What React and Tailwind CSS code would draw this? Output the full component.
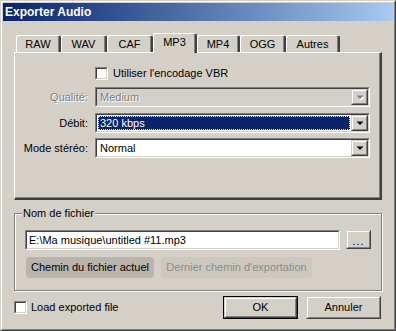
import React from 'react'

const font = { fontFamily: '"Liberation Sans", Arial, sans-serif' }

function Sunken({ className = '', inner = '', children }) {
  return (
    <div className={`border border-t-[#808080] border-l-[#808080] border-b-white border-r-white ${className}`}>
      <div className={`h-full border border-t-[#404040] border-l-[#404040] border-b-[#d4d0c8] border-r-[#d4d0c8] ${inner}`}>
        {children}
      </div>
    </div>
  )
}

function Raised({ className = '', children }) {
  return (
    <div className={`border border-t-[#d4d0c8] border-l-[#d4d0c8] border-b-[#404040] border-r-[#404040] bg-[#d4d0c8] ${className}`}>
      <div className="h-full border border-t-white border-l-white border-b-[#808080] border-r-[#808080] flex items-center justify-center">
        {children}
      </div>
    </div>
  )
}

function Arrow({ disabled }) {
  return (
    <svg width="8" height="5" viewBox="0 0 8 5">
      {disabled && <polygon points="2,2 9,2 5.5,5.5" fill="#fff" />}
      <polygon points="0.5,0.5 7.5,0.5 4,4" fill={disabled ? '#808080' : '#000'} />
    </svg>
  )
}

function Combo({ value, disabled, selected }) {
  return (
    <Sunken className="w-[275px] h-[20px]" inner={`flex ${disabled ? 'bg-[#d4d0c8]' : 'bg-white'}`}>
      <div className="flex-1 p-px flex">
        {selected ? (
          <div className="flex-1 bg-[#0a246a] text-white border border-dotted border-[#f5e9a0] flex items-center pl-[1px] text-[11px]">
            {value}
          </div>
        ) : (
          <div className={`flex-1 flex items-center pl-[2px] text-[11px] ${disabled ? 'text-[#808080] [text-shadow:1px_1px_0_#fff]' : 'text-black'}`}>
            {value}
          </div>
        )}
      </div>
      <Raised className="w-[17px] h-full">
        <Arrow disabled={disabled} />
      </Raised>
    </Sunken>
  )
}

function Check() {
  return <Sunken className="w-[13px] h-[13px] shrink-0" inner="bg-white" />
}

const tabs = [
  ['RAW', 'w-[45px]'],
  ['WAV', 'w-[46px]'],
  ['CAF', 'w-[46px]'],
  ['MP3', 'w-[44px]'],
  ['MP4', 'w-[43px]'],
  ['OGG', 'w-[46px]'],
  ['Autres', 'w-[54px]'],
]

export default function App() {
  return (
    <div style={font} className="w-[396px] h-[331px] text-[11px] text-black bg-[#d4d0c8]">
      <div className="h-full border border-t-[#d4d0c8] border-l-[#d4d0c8] border-b-[#404040] border-r-[#404040]">
        <div className="h-full border border-t-white border-l-white border-b-[#808080] border-r-[#808080] p-px flex flex-col">
          <div className="h-[18px] bg-gradient-to-r from-[#0a246a] to-[#a6caf0] text-white font-bold text-[12px] flex items-center pl-[2px]">
            Exporter Audio
          </div>

          <div className="px-[11px] pt-[12px] flex flex-col">
            <div className="flex items-end h-[19px] pl-[2px]">
              {tabs.map(([t, w]) => {
                const sel = t === 'MP3'
                return (
                  <div
                    key={t}
                    className={`${w} ${sel ? 'h-[20px] -mb-px relative z-10 pb-[3px]' : 'h-[17px]'} bg-[#d4d0c8] border-t border-l border-r-2 border-t-white border-l-white border-r-[#404040] rounded-t-[3px] shadow-[inset_-1px_0_0_#808080] flex items-center justify-center`}
                  >
                    {t}
                  </div>
                )
              })}
            </div>

            <div className="h-[148px] border-t border-l border-b-2 border-r-2 border-t-white border-l-white border-b-[#404040] border-r-[#404040] shadow-[inset_-1px_-1px_0_#808080] pt-[14px]">
              <div className="flex items-center gap-[5px] pl-[80px] h-[13px]">
                <Check />
                <span>Utiliser l'encodage VBR</span>
              </div>
              <div className="grid grid-cols-[73px_275px] gap-x-[7px] items-center mt-[7px]">
                <span className="text-right text-[#808080] [text-shadow:1px_1px_0_#fff]">Qualité:</span>
                <Combo value="Medium" disabled />
              </div>
              <div className="grid grid-cols-[73px_275px] gap-x-[7px] items-center mt-[6px]">
                <span className="text-right">Débit:</span>
                <Combo value="320 kbps" selected />
              </div>
              <div className="grid grid-cols-[73px_275px] gap-x-[7px] items-center mt-[5px]">
                <span className="text-right">Mode stéréo:</span>
                <Combo value="Normal" />
              </div>
            </div>

            <div className="relative mt-[13px] h-[78px] border border-[#808080] shadow-[inset_1px_1px_0_#fff,1px_1px_0_#fff] pt-[16px] pl-[10px]">
              <span className="absolute -top-[7px] left-[7px] px-px bg-[#d4d0c8] leading-[13px]">Nom de fichier</span>
              <div className="flex gap-[6px]">
                <Sunken className="w-[315px] h-[20px]" inner="bg-white flex items-center pl-[2px]">
                  E:\Ma musique\untitled #11.mp3
                </Sunken>
                <Raised className="w-[25px] h-[19px]">
                  <span className="mt-[3px] tracking-[1px]">...</span>
                </Raised>
              </div>
              <div className="flex gap-[7px] mt-[7px] ml-px">
                <div className="w-[128px] h-[21px] rounded-[4px] bg-[#b9b5ad] flex items-center justify-center">
                  Chemin du fichier actuel
                </div>
                <div className="w-[151px] h-[21px] rounded-[4px] bg-[#ccc8c0] text-[#8f8c86] flex items-center justify-center">
                  Dernier chemin d'exportation
                </div>
              </div>
            </div>

            <div className="flex items-center justify-between mt-[5px] pr-px">
              <div className="flex items-center gap-[4px]">
                <Check />
                <span>Load exported file</span>
              </div>
              <div className="flex gap-[8px]">
                <div className="w-[75px] h-[23px] border border-black">
                  <Raised className="h-full">OK</Raised>
                </div>
                <Raised className="w-[75px] h-[23px]">Annuler</Raised>
              </div>
            </div>
          </div>
        </div>
      </div>
    </div>
  )
}
